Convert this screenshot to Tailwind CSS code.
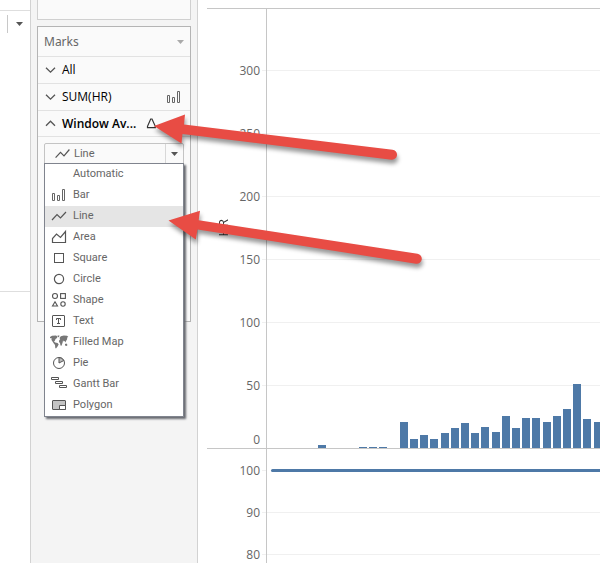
<!DOCTYPE html>
<html lang="en">
<head>
<meta charset="utf-8">
<title>Marks card</title>
<script src="https://cdn.jsdelivr.net/npm/@tailwindcss/browser@4"></script>
</head>
<body class="relative flex h-screen overflow-hidden bg-white text-xs text-[#666] font-['Open_Sans',sans-serif]">

<section class="w-[30px] shrink-0" aria-label="Data pane">
  <div class="h-[11px] border-b border-[#dedede]"></div>
  <div class="flex h-[280px] items-start pt-1 pl-[7px]">
    <button class="flex h-[18px] items-center border-l border-[#c8c8c8] pl-2" aria-label="Data menu">
      <svg class="h-1 w-[7px]" viewBox="0 0 7 4" fill="#555"><path d="M0 0h7L3.5 4z"/></svg>
    </button>
  </div>
  <div class="border-t border-[#dedede]"></div>
</section>

<aside class="flex w-[168px] shrink-0 flex-col gap-1.5 border-x border-[#d2d2d2] bg-[#f4f4f4] px-1.5">
  <div class="h-5 border border-t-0 border-[#d0d0d0] bg-[#fafafa]"></div>
  <section class="flex flex-col border border-[#b4b4b4] bg-[#fafafa]">
    <header class="flex h-[30px] items-center justify-between border-b border-[#e2e2e2] px-1.5 font-['Noto_Sans',sans-serif]">
      <h2>Marks</h2>
      <button aria-label="Marks menu"><svg class="h-1 w-[7px]" viewBox="0 0 7 4" fill="#aaa"><path d="M0 0h7L3.5 4z"/></svg></button>
    </header>
    <button class="flex h-[27px] items-center gap-1.5 border-b border-[#e2e2e2] pr-2.5 pl-[7px] text-black">
      <svg class="h-[11px] w-[11px]" viewBox="0 0 11 11" fill="none" stroke="#555" stroke-width="1.3"><path d="M1 2.700l4.500 4.500L10 2.700"/></svg>
      <span>All</span>
    </button>
    <button class="flex h-[27px] items-center gap-1.5 border-b border-[#e2e2e2] pr-2.5 pl-[7px] text-black">
      <svg class="h-[11px] w-[11px]" viewBox="0 0 11 11" fill="none" stroke="#555" stroke-width="1.3"><path d="M1 2.700l4.500 4.500L10 2.700"/></svg>
      <span>SUM(HR)</span>
      <svg class="ml-auto h-3 w-[13px]" viewBox="0 0 13 12" fill="none" stroke="#666"><path d="M.5 4.500h2v7h-2zM5.500 6.500h2v5h-2zM10.500 .5h2v11h-2z"/></svg>
    </button>
    <button class="flex h-[26px] items-center gap-1.5 border-b border-[#e2e2e2] pl-[7px] font-semibold text-black">
      <svg class="h-[11px] w-[11px]" viewBox="0 0 11 11" fill="none" stroke="#555" stroke-width="1.3"><path d="M1 7.700l4.500-4.500L10 7.700"/></svg>
      <span class="w-[78px] text-left">Window Av...</span>
      <svg class="h-[11px] w-[11px]" viewBox="0 0 11 11" fill="none" stroke="#333" stroke-width="1.200"><path d="M4.700 1h1.300L9.300 8.300v1.300H1.500V8.300z"/></svg>
    </button>
    <div class="h-[184px] px-1.5 pt-1.5 font-['Roboto',sans-serif] text-[11px]">
      <div class="relative">
        <button class="flex h-[21px] w-full items-center rounded-t-xs border border-[#c4c4c4] pl-2.5" aria-haspopup="listbox" aria-expanded="true" aria-label="Mark type: Line">
          <svg class="h-3 w-[15px]" viewBox="0 0 15 12" fill="none" stroke="#555" stroke-width="1.200"><path d="M.6 9.700L5.500 4.300 9 7.800 14.400 1.500"/></svg>
          <span class="ml-1 pt-0.5">Line</span>
          <span class="ml-auto flex h-full w-[18px] items-center justify-center border-l border-[#d8d8d8]"><svg class="h-1 w-[7px]" viewBox="0 0 7 4" fill="#555"><path d="M0 0h7L3.500 4z"/></svg></span>
        </button>
        <ul role="listbox" aria-label="Mark type" class="absolute top-5 left-0 z-10 w-full border border-[#80848e] bg-white shadow-[2px_2px_2px_#66686f] [&_svg]:mb-px">
          <li role="option" class="flex h-[21px] items-center gap-1.5 pl-1.5"><span class="w-4"></span>Automatic</li>
          <li role="option" class="flex h-[21px] items-center gap-1.5 pl-1.5"><svg class="h-4 w-4" viewBox="0 0 16 16" fill="none" stroke="#666"><path d="M1.500 6.500h2v7h-2zM6.500 8.500h2v5h-2zM11.500 2.500h2v11h-2z"/></svg>Bar</li>
          <li role="option" aria-selected="true" class="flex h-[21px] items-center gap-1.5 bg-[#e5e5e5] pl-1.5"><svg class="h-4 w-4" viewBox="0 0 16 16" fill="none" stroke="#555" stroke-width="1.200"><path d="M1 12l5-5.500 3.500 3.500L15 4"/></svg>Line</li>
          <li role="option" class="flex h-[21px] items-center gap-1.5 pl-1.5"><svg class="h-4 w-4" viewBox="0 0 16 16" fill="none" stroke="#555" stroke-width="1.200"><path d="M1.500 13.500V9.500l4-4.500 4 3.500 5-6v11z"/></svg>Area</li>
          <li role="option" class="flex h-[21px] items-center gap-1.5 pl-1.5"><svg class="h-4 w-4" viewBox="0 0 16 16" fill="none" stroke="#555"><rect x="3.500" y="3.500" width="9" height="9"/></svg>Square</li>
          <li role="option" class="flex h-[21px] items-center gap-1.5 pl-1.5"><svg class="h-4 w-4" viewBox="0 0 16 16" fill="none" stroke="#555" stroke-width="1.200"><circle cx="8" cy="8" r="4.600"/></svg>Circle</li>
          <li role="option" class="flex h-[21px] items-center gap-1.5 pl-1.5"><svg class="h-4 w-4" viewBox="0 0 16 16" fill="none" stroke="#555" stroke-width="1.100"><circle cx="4" cy="4" r="2.500"/><rect x="9.600" y="1.600" width="4.800" height="4.800"/><path d="M4 9.800L6.500 14h-5z"/><circle cx="12" cy="12" r="2.200"/></svg>Shape</li>
          <li role="option" class="flex h-[21px] items-center gap-1.5 pl-1.5"><svg class="h-4 w-4" viewBox="0 0 16 16" fill="none" stroke="#555"><rect x="1.500" y="2.500" width="12" height="11" rx=".5"/><path d="M5.500 7V5.500h4V7M7.500 5.500v5M6 10.500h3"/></svg>Text</li>
          <li role="option" class="flex h-[21px] items-center gap-1.5 pl-1.5"><svg class="h-4 w-4 overflow-visible" viewBox="0 0 16 16" fill="#777"><path d="M-1 3l2-1.200 4-.3 1.500 1-.500 1.500-1.500 1L4 6.500 3 7.500l1.200 1L6.500 9l1.200 1.200-1 2L5 14.500l-.700-.5-.3-3L2.800 9.500 1.500 7.500.5 6V4L-1 4.300zM6.500 1.500h2L8 3 7 3.300zM8.500 4L9.800 2.300l3-.8 3.200.3 1.300 1-1 .7-.3 2L15 7l-.500 1.500-.8-1.500-1 .5L12 6.300l-.3 2-.5 1.500-.7 2-1-.3L9 9 8 8l.2-1.700 1-1zM14 10l1.500-.5 1 1.500-.8 1-1.700-.5z"/></svg>Filled Map</li>
          <li role="option" class="flex h-[21px] items-center gap-1.5 pl-1.5"><svg class="h-4 w-4" viewBox="0 0 16 16" fill="none" stroke="#555"><circle cx="8" cy="8" r="5.500"/><path d="M8 8V2.500A5.500 5.500 0 0 1 12.800 5.500z" fill="#bbb"/></svg>Pie</li>
          <li role="option" class="flex h-[21px] items-center gap-1.5 pl-1.5"><svg class="h-4 w-4" viewBox="0 0 16 16" fill="none" stroke="#555"><path d="M.5 1.500h7v2h-7zM4.500 5.500h7v2h-7zM8.500 9.500h7v2h-7z"/></svg>Gantt Bar</li>
          <li role="option" class="flex h-[21px] items-center gap-1.5 pl-1.5"><svg class="h-4 w-4" viewBox="0 0 16 16" fill="#c4c4c4" stroke="#555"><rect x="1.500" y="3.500" width="13" height="9" rx=".5"/><path d="M8.500 12.500v-4h6v4z" fill="#fff"/></svg>Polygon</li>
        </ul>
      </div>
    </div>
  </section>
</aside>

<main class="flex min-w-0 flex-1 flex-col pt-2 pl-[9px]">
  <section class="relative shrink-0 overflow-hidden border-y border-[#c6c6c6]" aria-label="Heart rate bars">
    <div class="flex h-[30px] pl-[59px]"><i class="flex-1 border-l border-[#c6c6c6]"></i></div>
    <div class="flex h-[63px] items-center"><span class="w-[53px] text-right">300</span><i class="ml-0.5 h-px w-1 bg-[#f0f0f0]"></i><div class="flex flex-1 items-center self-stretch border-l border-[#c6c6c6]"><i class="h-px flex-1 bg-[#f0f0f0]"></i></div></div>
    <div class="flex h-[63px] items-center"><span class="w-[53px] text-right">250</span><i class="ml-0.5 h-px w-1 bg-[#f0f0f0]"></i><div class="flex flex-1 items-center self-stretch border-l border-[#c6c6c6]"><i class="h-px flex-1 bg-[#f0f0f0]"></i></div></div>
    <div class="flex h-[63px] items-center"><span class="w-[53px] text-right">200</span><i class="ml-0.5 h-px w-1 bg-[#f0f0f0]"></i><div class="flex flex-1 items-center self-stretch border-l border-[#c6c6c6]"><i class="h-px flex-1 bg-[#f0f0f0]"></i></div></div>
    <div class="flex h-[63px] items-center"><span class="w-[53px] text-right">150</span><i class="ml-0.5 h-px w-1 bg-[#f0f0f0]"></i><div class="flex flex-1 items-center self-stretch border-l border-[#c6c6c6]"><i class="h-px flex-1 bg-[#f0f0f0]"></i></div></div>
    <div class="flex h-[63px] items-center"><span class="w-[53px] text-right">100</span><i class="ml-0.5 h-px w-1 bg-[#f0f0f0]"></i><div class="flex flex-1 items-center self-stretch border-l border-[#c6c6c6]"><i class="h-px flex-1 bg-[#f0f0f0]"></i></div></div>
    <div class="flex h-[63px] items-center"><span class="w-[53px] text-right">50</span><i class="ml-0.5 h-px w-1 bg-[#f0f0f0]"></i><div class="flex flex-1 items-center self-stretch border-l border-[#c6c6c6]"><i class="h-px flex-1 bg-[#f0f0f0]"></i></div></div>
    <div class="flex h-[31px] items-end"><span class="w-[53px] text-right">0</span><i class="ml-1.5 flex-1 self-stretch border-l border-[#c6c6c6]"></i></div>
    <span class="absolute top-[210px] left-2 rotate-180 text-[13px] text-[#333] [writing-mode:vertical-rl]">HR</span>
    <svg class="absolute bottom-0 left-[60px] h-16 w-[340px]" viewBox="0 0 340 64" fill="#4e79a7" role="img" aria-label="SUM(HR) bars">
      <path d="M51 61h8v3h-8zM92 63h8v1h-8zM102 63h8v1h-8zM112 63h8v1h-8zM133 38h8v26h-8zM143 55h8v9h-8zM153 51h8v13h-8zM163 55h8v9h-8zM174 49h8v15h-8zM184 44h8v20h-8zM194 39h8v25h-8zM204 49h8v15h-8zM214 43h8v21h-8zM225 48h8v16h-8zM235 32h8v32h-8zM245 44h8v20h-8zM255 34h8v30h-8zM265 34h8v30h-8zM276 38h8v26h-8zM286 32h8v32h-8zM296 25h8v39h-8zM306 0h8v64h-8zM316 35h8v29h-8zM327 38h8v26h-8z"/>
    </svg>
  </section>
  <section class="min-h-0 flex-1 overflow-hidden" aria-label="Window average line">
    <div class="flex h-[43px] items-center"><span class="w-[53px] text-right">100</span><i class="ml-0.5 h-px w-1 bg-[#f0f0f0]"></i><div class="flex flex-1 items-center self-stretch border-l border-[#c6c6c6] pl-1"><i class="h-[3px] flex-1 rounded-l-full bg-[#4e79a7]"></i></div></div>
    <div class="flex h-[41px] items-center"><span class="w-[53px] text-right">90</span><i class="ml-0.5 h-px w-1 bg-[#f0f0f0]"></i><div class="flex flex-1 items-center self-stretch border-l border-[#c6c6c6]"><i class="h-px flex-1 bg-[#f0f0f0]"></i></div></div>
    <div class="flex h-[43px] items-center"><span class="w-[53px] text-right">80</span><i class="ml-0.5 h-px w-1 bg-[#f0f0f0]"></i><div class="flex flex-1 items-center self-stretch border-l border-[#c6c6c6]"><i class="h-px flex-1 bg-[#f0f0f0]"></i></div></div>
  </section>
</main>

<svg class="pointer-events-none absolute top-[100px] left-[140px] z-20 h-[180px] w-[300px] drop-shadow-[1px_4px_2px_rgba(0,0,0,0.4)]" viewBox="140 100 300 180" fill="#e84c44" aria-hidden="true">
  <path d="M154 126L185 114.500 184 124.500 392.500 149.700A5 5 0 0 1 391.500 159.700L182.500 134 181.500 143.500z"/>
  <path d="M168.500 220.500L200 210.800 198.700 220.300 417.500 253.700A5 5 0 0 1 416 263.700L197.500 229.500 195.800 239.500z"/>
</svg>
</body>
</html>
